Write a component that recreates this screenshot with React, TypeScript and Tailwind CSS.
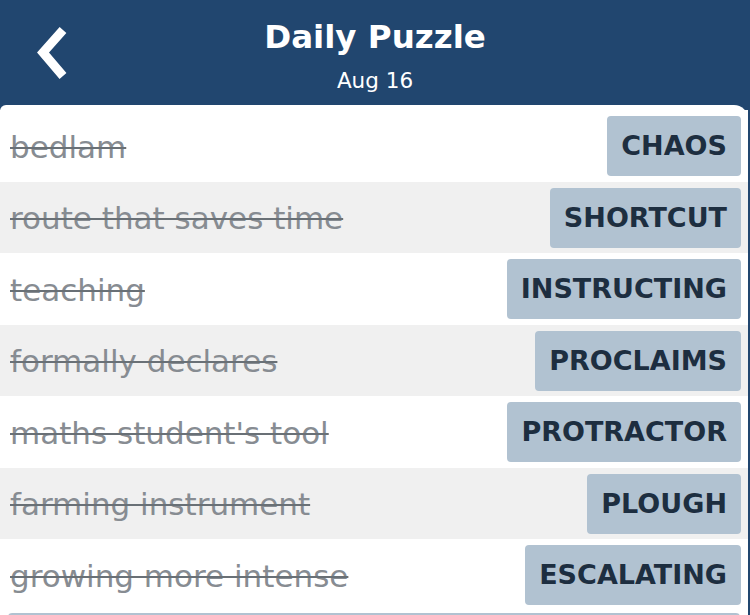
const rows = [
  { clue: "bedlam", answer: "CHAOS" },
  { clue: "route that saves time", answer: "SHORTCUT" },
  { clue: "teaching", answer: "INSTRUCTING" },
  { clue: "formally declares", answer: "PROCLAIMS" },
  { clue: "maths student's tool", answer: "PROTRACTOR" },
  { clue: "farming instrument", answer: "PLOUGH" },
  { clue: "growing more intense", answer: "ESCALATING" },
];

export default function App() {
  return (
    <div className="w-[750px] h-[615px] overflow-hidden bg-[#21466f] font-['DejaVu_Sans',sans-serif]">
      {/* Header */}
      <div className="relative h-[105px] flex flex-col items-center text-white">
        <button className="absolute left-[30px] top-[24px] w-[46px] h-[60px] flex items-center justify-center">
          <svg width="46" height="60" viewBox="0 0 46 60" fill="none">
            <path d="M33 6 L13 28.5 L33 52" stroke="white" strokeWidth="9" strokeLinecap="butt" strokeLinejoin="miter" />
          </svg>
        </button>
        <h1 className="mt-[17px] text-[32.5px] leading-[40px] font-bold">Daily Puzzle</h1>
        <p className="mt-[11px] text-[21.5px] leading-[26px]">Aug 16</p>
      </div>

      {/* Word list */}
      <div className="mr-[2px] bg-white rounded-tl-[6px] rounded-tr-[14px] pt-[5px]">
        {rows.map((row, i) => (
          <div
            key={row.answer}
            className={`h-[71.5px] flex items-center justify-between pl-[10px] pr-[7px] ${
              i % 2 === 1 ? "bg-[#f0f0f0]" : "bg-white"
            }`}
          >
            <span className="mt-[2px] text-[31px] leading-[40px] text-[#878c92] line-through decoration-[2px] decoration-[#697076]">
              {row.clue}
            </span>
            <span className="mt-[1px] h-[60px] px-[14px] flex items-center rounded-[4px] bg-[#b1c2d1] text-[27px] font-bold text-[#1d2e40]">
              {row.answer}
            </span>
          </div>
        ))}
        <div className="h-[2px] bg-white" />
        <div className="mx-[8px] h-[20px] rounded-t-[4px] bg-[#b1c2d1]" />
      </div>
    </div>
  );
}
